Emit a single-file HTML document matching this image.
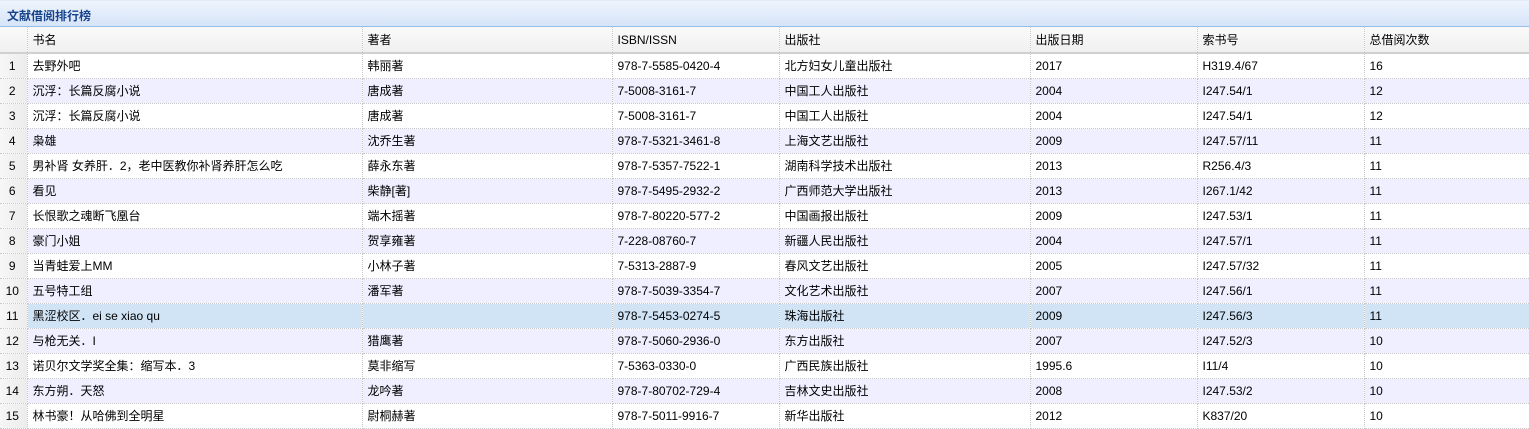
<!DOCTYPE html>
<html><head><meta charset="utf-8"><style>
*{margin:0;padding:0;box-sizing:border-box}
body{width:1529px;height:429px;background:#fff;font-family:"Liberation Sans","Noto Sans CJK SC",sans-serif;font-size:12px;color:#000;overflow:hidden;position:relative}
.title{position:absolute;left:0;top:0;width:1529px;height:27px;background:linear-gradient(#eef4fd,#d6e4f8);border-top:1px solid #e3ebf7;border-bottom:1px solid #99bbe8;font-weight:bold;color:#15428b;padding:6px 0 0 7px;font-size:12px}
table{position:absolute;left:0;top:27px;border-collapse:collapse;table-layout:fixed;width:1529px}
td{height:25px;padding:0 4px 0 5px;white-space:nowrap;overflow:hidden;border-right:1px dotted #c8c8c8;border-bottom:1px dotted #c8c8c8;vertical-align:middle}
tr.h td{background:linear-gradient(#fafafa,#f0f0f0);border-bottom:2px solid #d0d0d0;height:26px}
td.n{background:linear-gradient(90deg,#f6f6f6,#ececec);text-align:center;padding:0 2px 0 0}
tr.h td.n{background:linear-gradient(#fafafa,#f0f0f0)}
tr.a td{background:#efefff}
tr.a td.n,tr.s td.n{background:linear-gradient(90deg,#f6f6f6,#ececec)}
tr.s td{background:#d0e4f6}
td:last-child{border-right:none}
</style></head><body>
<div class="title">文献借阅排行榜</div>
<table>
<colgroup><col style="width:27px"><col style="width:335px"><col style="width:250px"><col style="width:167px"><col style="width:251px"><col style="width:167px"><col style="width:167px"><col style="width:165px"></colgroup>
<tr class="h"><td class="n"></td><td>书名</td><td>著者</td><td>ISBN/ISSN</td><td>出版社</td><td>出版日期</td><td>索书号</td><td>总借阅次数</td></tr>
<tr><td class="n">1</td><td>去野外吧</td><td>韩丽著</td><td>978-7-5585-0420-4</td><td>北方妇女儿童出版社</td><td>2017</td><td>H319.4/67</td><td>16</td></tr>
<tr class="a"><td class="n">2</td><td>沉浮：长篇反腐小说</td><td>唐成著</td><td>7-5008-3161-7</td><td>中国工人出版社</td><td>2004</td><td>I247.54/1</td><td>12</td></tr>
<tr><td class="n">3</td><td>沉浮：长篇反腐小说</td><td>唐成著</td><td>7-5008-3161-7</td><td>中国工人出版社</td><td>2004</td><td>I247.54/1</td><td>12</td></tr>
<tr class="a"><td class="n">4</td><td>枭雄</td><td>沈乔生著</td><td>978-7-5321-3461-8</td><td>上海文艺出版社</td><td>2009</td><td>I247.57/11</td><td>11</td></tr>
<tr><td class="n">5</td><td>男补肾 女养肝．2，老中医教你补肾养肝怎么吃</td><td>薛永东著</td><td>978-7-5357-7522-1</td><td>湖南科学技术出版社</td><td>2013</td><td>R256.4/3</td><td>11</td></tr>
<tr class="a"><td class="n">6</td><td>看见</td><td>柴静[著]</td><td>978-7-5495-2932-2</td><td>广西师范大学出版社</td><td>2013</td><td>I267.1/42</td><td>11</td></tr>
<tr><td class="n">7</td><td>长恨歌之魂断飞凰台</td><td>端木摇著</td><td>978-7-80220-577-2</td><td>中国画报出版社</td><td>2009</td><td>I247.53/1</td><td>11</td></tr>
<tr class="a"><td class="n">8</td><td>豪门小姐</td><td>贺享雍著</td><td>7-228-08760-7</td><td>新疆人民出版社</td><td>2004</td><td>I247.57/1</td><td>11</td></tr>
<tr><td class="n">9</td><td>当青蛙爱上MM</td><td>小林子著</td><td>7-5313-2887-9</td><td>春风文艺出版社</td><td>2005</td><td>I247.57/32</td><td>11</td></tr>
<tr class="a"><td class="n">10</td><td>五号特工组</td><td>潘军著</td><td>978-7-5039-3354-7</td><td>文化艺术出版社</td><td>2007</td><td>I247.56/1</td><td>11</td></tr>
<tr class="s"><td class="n">11</td><td>黑涩校区．ei se xiao qu</td><td></td><td>978-7-5453-0274-5</td><td>珠海出版社</td><td>2009</td><td>I247.56/3</td><td>11</td></tr>
<tr class="a"><td class="n">12</td><td>与枪无关．I</td><td>猎鹰著</td><td>978-7-5060-2936-0</td><td>东方出版社</td><td>2007</td><td>I247.52/3</td><td>10</td></tr>
<tr><td class="n">13</td><td>诺贝尔文学奖全集：缩写本．3</td><td>莫非缩写</td><td>7-5363-0330-0</td><td>广西民族出版社</td><td>1995.6</td><td>I11/4</td><td>10</td></tr>
<tr class="a"><td class="n">14</td><td>东方朔．天怒</td><td>龙吟著</td><td>978-7-80702-729-4</td><td>吉林文史出版社</td><td>2008</td><td>I247.53/2</td><td>10</td></tr>
<tr><td class="n">15</td><td>林书豪！从哈佛到全明星</td><td>尉桐赫著</td><td>978-7-5011-9916-7</td><td>新华出版社</td><td>2012</td><td>K837/20</td><td>10</td></tr>
</table>
</body></html>
